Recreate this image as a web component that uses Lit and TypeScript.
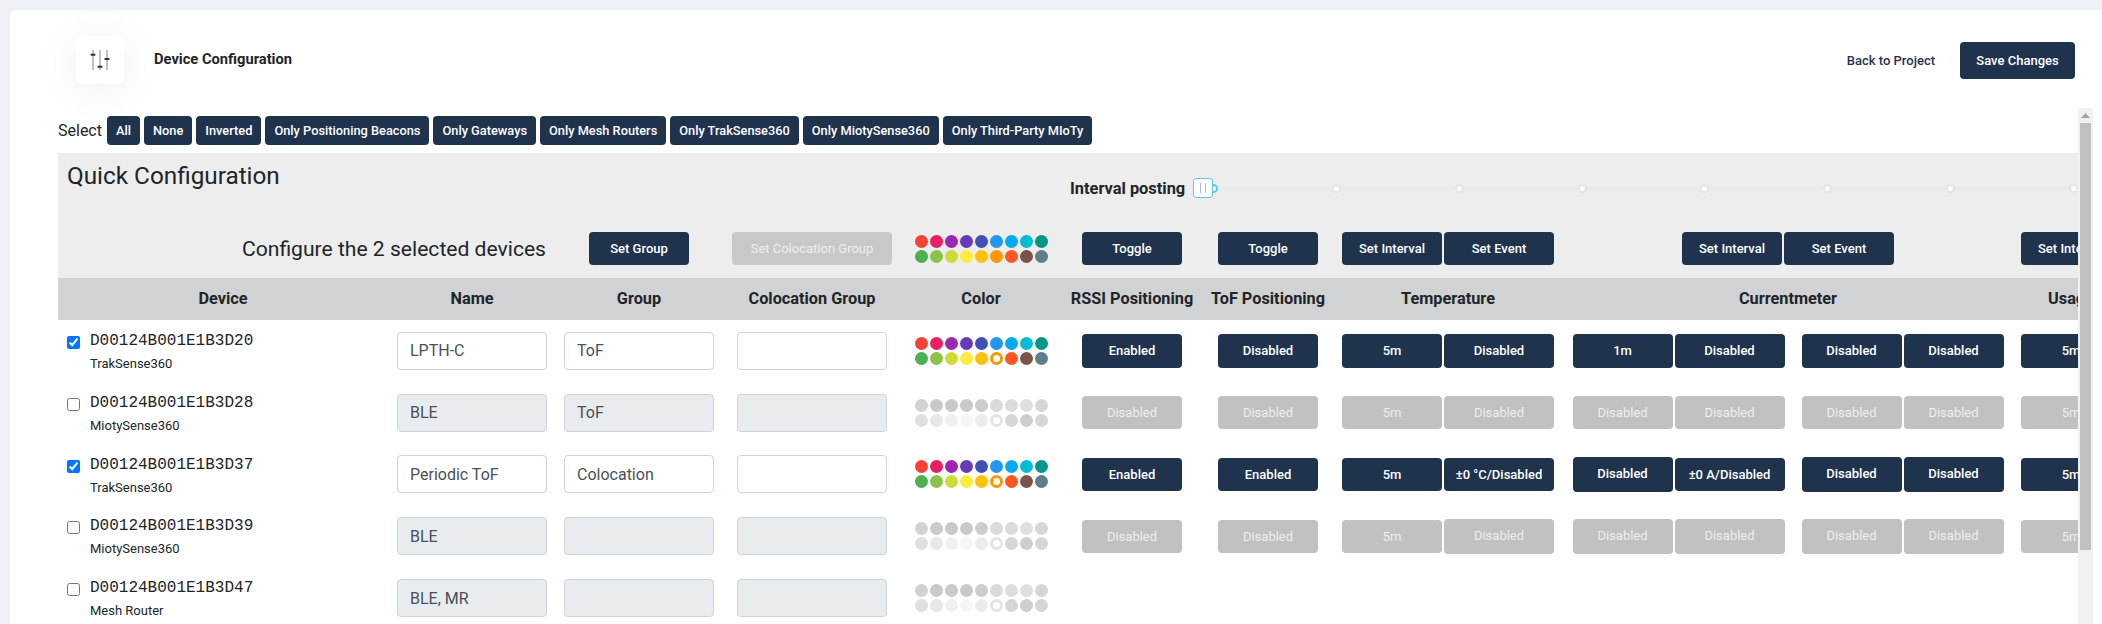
import { LitElement, html, css, nothing } from "lit";
import { customElement } from "lit/decorators.js";

// Material palette used by the colour pickers, two rows of nine
const PALETTE = [
  "#f44336", "#e91e63", "#9c27b0", "#673ab7", "#3f51b5", "#2196f3", "#03a9f4", "#00bcd4", "#009688",
  "#4caf50", "#8bc34a", "#cddc39", "#ffeb3b", "#ffc107", "#ff9800", "#ff5722", "#795548", "#607d8b",
];

const FILTERS = [
  "All",
  "None",
  "Inverted",
  "Only Positioning Beacons",
  "Only Gateways",
  "Only Mesh Routers",
  "Only TrakSense360",
  "Only MiotySense360",
  "Only Third-Party MIoTy",
];

interface Device {
  id: string;
  model: string;
  name: string;
  group: string;
  selected: boolean;
  rssi?: string;
  tof?: string;
  temp?: [string, string];
  current?: [string, string];
  extra?: [string, string];
  usage?: string;
  tallCurrent?: boolean;
}

const DEVICES: Device[] = [
  {
    id: "D00124B001E1B3D20", model: "TrakSense360", name: "LPTH-C", group: "ToF", selected: true,
    rssi: "Enabled", tof: "Disabled", temp: ["5m", "Disabled"], current: ["1m", "Disabled"],
    extra: ["Disabled", "Disabled"], usage: "5m",
  },
  {
    id: "D00124B001E1B3D28", model: "MiotySense360", name: "BLE", group: "ToF", selected: false,
    rssi: "Disabled", tof: "Disabled", temp: ["5m", "Disabled"], current: ["Disabled", "Disabled"],
    extra: ["Disabled", "Disabled"], usage: "5m",
  },
  {
    id: "D00124B001E1B3D37", model: "TrakSense360", name: "Periodic ToF", group: "Colocation", selected: true,
    rssi: "Enabled", tof: "Enabled", temp: ["5m", "±0 °C/Disabled"], current: ["Disabled", "±0 A/Disabled"],
    extra: ["Disabled", "Disabled"], usage: "5m", tallCurrent: true,
  },
  {
    id: "D00124B001E1B3D39", model: "MiotySense360", name: "BLE", group: "", selected: false,
    rssi: "Disabled", tof: "Disabled", temp: ["5m", "Disabled"], current: ["Disabled", "Disabled"],
    extra: ["Disabled", "Disabled"], usage: "5m", tallCurrent: true,
  },
  { id: "D00124B001E1B3D47", model: "Mesh Router", name: "BLE, MR", group: "", selected: false },
];

@customElement("app-root")
export class AppRoot extends LitElement {
  static styles = css`
    :host {
      display: block;
      height: 624px;
      overflow: hidden;
      padding: 10px 0 0 10px;
      box-sizing: border-box;
      background: #edf1f5;
      font-family: Roboto, "Liberation Sans", sans-serif;
      color: #212529;
    }
    .card {
      height: 614px;
      background: #fff;
      border-radius: 6px 0 0 0;
      overflow: hidden;
    }
    .top {
      display: flex;
      align-items: center;
      height: 98px;
      padding: 26px 27px 24px 66px;
      box-sizing: border-box;
    }
    .icon-box {
      display: flex;
      align-items: center;
      justify-content: center;
      width: 48px;
      height: 48px;
      border-radius: 6px;
      background: #fff;
      box-shadow: 0 4px 40px rgba(0, 0, 0, 0.08);
    }
    .title {
      margin: 0 0 2px 30px;
      font-size: 14.7px;
      font-weight: 700;
      flex: 1;
    }
    .back {
      margin-right: 25px;
      font-size: 13px;
      font-weight: 500;
      color: #1f334d;
    }
    .body {
      display: flex;
      height: 516px;
      padding: 0 9px 0 48px;
    }
    .main {
      flex: 1;
      min-width: 0;
      overflow: hidden;
      padding-top: 8px;
    }
    .select {
      display: flex;
      align-items: center;
      gap: 4px;
      height: 29px;
      margin-bottom: 8px;
      font-size: 16px;
    }
    .select span {
      width: 45px;
    }
    .btn {
      display: inline-flex;
      align-items: center;
      justify-content: center;
      flex: none;
      box-sizing: border-box;
      width: 100px;
      height: 33px;
      padding: 0;
      border: 0;
      border-radius: 4px;
      background: #1f334d;
      color: #fff;
      font: 500 13px Roboto, "Liberation Sans", sans-serif;
      white-space: nowrap;
    }
    .row .btn {
      height: 33.5px;
    }
    .select .btn {
      width: auto;
      height: 29px;
      padding: 0 9px;
      font-size: 12.8px;
    }
    .btn.save {
      width: 115px;
      height: 37px;
    }
    .btn.wide {
      width: 110px;
    }
    .btn.colo {
      width: 160px;
    }
    .btn.off {
      background: #c1c1c1;
      color: #eee;
      font-weight: 400;
    }
    .btn.muted {
      background: #c8c8c8;
      color: #eee;
      font-weight: 400;
    }
    .row .btn.tall {
      height: 35px;
      padding-bottom: 2px;
    }
    .panel {
      height: 125px;
      background: #ededed;
    }
    .panel-top {
      display: flex;
      height: 79px;
    }
    .panel-title {
      width: 1003px;
      margin: 7px 0 0 9px;
      font-size: 24.3px;
      font-weight: 400;
      line-height: 32px;
      flex: none;
    }
    .slider {
      display: flex;
      align-items: center;
      flex: none;
      height: 20px;
      margin-top: 25px;
    }
    .slider-label {
      width: 123px;
      font-size: 16.4px;
      font-weight: 700;
      white-space: nowrap;
    }
    .track {
      position: relative;
      display: flex;
      align-items: center;
      justify-content: space-between;
      width: 869px;
      margin-left: 16px;
      height: 5px;
      background: #e6ebef;
    }
    .dot {
      width: 9px;
      height: 9px;
      box-sizing: border-box;
      border: 2px solid #e0e5ea;
      border-radius: 50%;
      background: #fff;
    }
    .dot.first {
      border-color: #5fcbe0;
    }
    .handle {
      position: absolute;
      left: -16px;
      top: -8px;
      display: flex;
      align-items: center;
      justify-content: center;
      gap: 4px;
      width: 20px;
      height: 20px;
      box-sizing: border-box;
      border: 1px solid #5fcbe0;
      border-radius: 3px;
      background: #fff;
    }
    .handle i {
      width: 1px;
      height: 10px;
      background: #b4b8bd;
    }
    .grid {
      display: grid;
      grid-template-columns: 330px 168px 166px 180px 158px 144px 128px 232px 448px 118px;
      width: 2072px;
    }
    .center {
      display: flex;
      align-items: center;
      justify-content: center;
      gap: 2px;
    }
    .configure {
      grid-column: span 2;
      padding-right: 10px;
      font-size: 21.1px;
      line-height: 33px;
      text-align: right;
    }
    .head {
      box-sizing: border-box;
      height: 42px;
      padding-bottom: 2px;
      align-items: center;
      background: #d1d2d4;
      font-size: 16.3px;
      font-weight: 700;
      text-align: center;
    }
    .row {
      height: 61.8px;
      align-items: center;
    }
    .device {
      align-self: start;
      display: flex;
      align-items: flex-start;
      gap: 10px;
      padding: 9px 0 0 9px;
    }
    .device input {
      margin: 7px 0 0;
      width: 13px;
      height: 13px;
    }
    .device-id {
      font: 16px/24px "Liberation Mono", monospace;
    }
    .device-model {
      font-size: 13px;
      line-height: 21px;
    }
    .field {
      width: 150px;
      height: 38px;
      box-sizing: border-box;
      padding: 0 12px;
      border: 1px solid #ced4da;
      border-radius: 4px;
      background: #fff;
      color: #495057;
      font: 16px Roboto, "Liberation Sans", sans-serif;
    }
    .field:disabled {
      background: #e9ecef;
    }
    .swatches {
      display: grid;
      grid-template-columns: repeat(9, 13px);
      gap: 2px;
    }
    .swatches.gray {
      filter: grayscale(1) opacity(0.3);
    }
    .swatch {
      width: 13px;
      height: 13px;
      border-radius: 50%;
    }
    .swatch.picked {
      box-sizing: border-box;
      border: 3px solid;
      background: #fff !important;
    }
    .pair {
      display: flex;
      align-items: center;
      gap: 2px;
    }
    .current {
      gap: 17px;
    }
    .scrollbar {
      flex: none;
      display: flex;
      flex-direction: column;
      align-items: center;
      width: 15px;
      background: #f1f1f1;
    }
    .arrow {
      height: 15px;
      display: flex;
      align-items: center;
      justify-content: center;
    }
    .thumb {
      width: 11px;
      height: 427px;
      background: #c1c1c1;
    }
  `;

  private swatches(picked: number, gray = false) {
    return html`<div class="swatches ${gray ? "gray" : ""}">
      ${PALETTE.map(
        (c, i) =>
          html`<div
            class="swatch ${i === picked ? "picked" : ""}"
            style="background:${c};border-color:${c}"
          ></div>`
      )}
    </div>`;
  }

  private btn(label: string, cls = "") {
    return html`<button class="btn ${cls}">${label}</button>`;
  }

  private renderRow(d: Device) {
    const off = d.selected ? "" : "off";
    const tall = d.tallCurrent ? "tall" : "";
    // the second cell of a selected row keeps the normal height
    const tallSecond = d.selected ? "" : tall;
    return html`<div class="grid row">
      <div class="device">
        <input type="checkbox" .checked=${d.selected} />
        <div>
          <div class="device-id">${d.id}</div>
          <div class="device-model">${d.model}</div>
        </div>
      </div>
      <div class="center"><input class="field" .value=${d.name} ?disabled=${!d.selected} /></div>
      <div class="center"><input class="field" .value=${d.group} ?disabled=${!d.selected} /></div>
      <div class="center"><input class="field" ?disabled=${!d.selected} /></div>
      <div class="center">${this.swatches(14, !d.selected)}</div>
      ${d.rssi
        ? html`
            <div class="center">${this.btn(d.rssi, off)}</div>
            <div class="center">${this.btn(d.tof!, off)}</div>
            <div class="center">
              ${this.btn(d.temp![0], off)}${this.btn(d.temp![1], `wide ${off} ${tallSecond}`)}
            </div>
            <div class="center current">
              <div class="pair">
                ${this.btn(d.current![0], `${off} ${tall}`)}${this.btn(d.current![1], `wide ${off} ${tallSecond}`)}
              </div>
              <div class="pair">
                ${this.btn(d.extra![0], `${off} ${tall}`)}${this.btn(d.extra![1], `${off} ${tall}`)}
              </div>
            </div>
            <div class="center">${this.btn(d.usage!, off)}</div>
          `
        : nothing}
    </div>`;
  }

  render() {
    return html`<div class="card">
      <div class="top">
        <div class="icon-box">
          <svg width="24" height="24" viewBox="0 0 24 24">
            <g stroke="#a0a0a0" stroke-width="1.3">
              <path d="M5 2v20M12 2v20M19 2v20" />
            </g>
            <g stroke="#333" stroke-width="2">
              <path d="M2.6 6.7h4.8M9.6 18.7h4.8M16.6 11h4.8" />
            </g>
          </svg>
        </div>
        <h1 class="title">Device Configuration</h1>
        <div class="back">Back to Project</div>
        <button class="btn save">Save Changes</button>
      </div>
      <div class="body">
        <div class="main">
          <div class="select">
            <span>Select</span>
            ${FILTERS.map((f) => this.btn(f))}
          </div>
          <div class="panel">
            <div class="panel-top">
              <h2 class="panel-title">Quick Configuration</h2>
              <div class="slider">
                <div class="slider-label">Interval posting</div>
                <div class="track">
                  <div class="dot first"></div>
                  ${[1, 2, 3, 4, 5, 6, 7].map(() => html`<div class="dot"></div>`)}
                  <div class="handle"><i></i><i></i></div>
                </div>
              </div>
            </div>
            <div class="grid">
              <div class="configure">Configure the 2 selected devices</div>
              <div class="center">${this.btn("Set Group")}</div>
              <div class="center">${this.btn("Set Colocation Group", "colo muted")}</div>
              <div class="center">${this.swatches(-1)}</div>
              <div class="center">${this.btn("Toggle")}</div>
              <div class="center">${this.btn("Toggle")}</div>
              <div class="center">${this.btn("Set Interval")}${this.btn("Set Event", "wide")}</div>
              <div class="center">${this.btn("Set Interval")}${this.btn("Set Event", "wide")}</div>
              <div class="center">${this.btn("Set Interval")}</div>
            </div>
          </div>
          <div class="grid head">
            <div>Device</div>
            <div>Name</div>
            <div>Group</div>
            <div>Colocation Group</div>
            <div>Color</div>
            <div>RSSI Positioning</div>
            <div>ToF Positioning</div>
            <div>Temperature</div>
            <div>Currentmeter</div>
            <div>Usage</div>
          </div>
          ${DEVICES.map((d) => this.renderRow(d))}
        </div>
        <div class="scrollbar">
          <div class="arrow">
            <svg width="9" height="5" viewBox="0 0 9 5"><path d="M4.5 0L9 5H0z" fill="#a3a3a3" /></svg>
          </div>
          <div class="thumb"></div>
        </div>
      </div>
    </div>`;
  }
}
